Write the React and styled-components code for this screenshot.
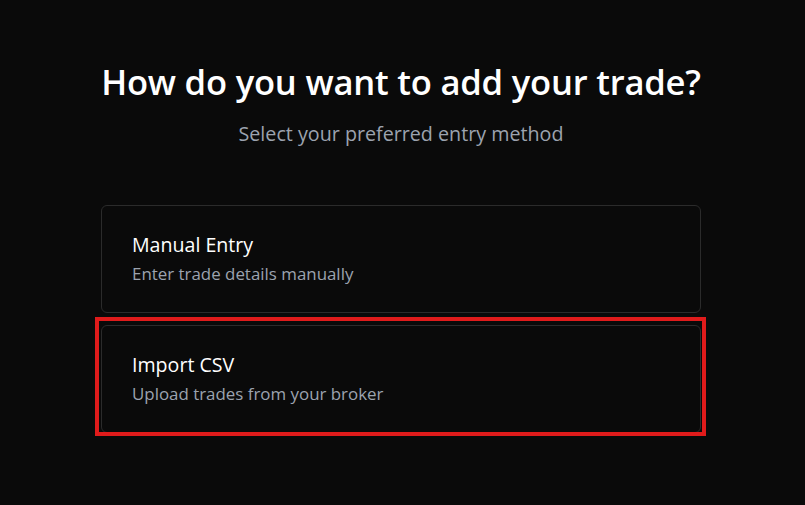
import React from 'react';
import styled, { createGlobalStyle } from 'styled-components';

const GlobalStyle = createGlobalStyle`
  html, body {
    margin: 0;
    padding: 0;
    background: #0a0a0a;
  }
  body {
    font-family: "Open Sans", "Noto Sans", sans-serif;
    color: #ffffff;
  }
`;

const Page = styled.div`
  min-height: 505px;
  display: flex;
  justify-content: center;
  padding-top: 58px;
  box-sizing: border-box;
`;

const Container = styled.div`
  width: 600px;
  margin-left: -3px;
`;

const Header = styled.div`
  text-align: center;
  margin-bottom: 57px;
`;

const Title = styled.h1`
  font-size: 34.6px;
  font-weight: 600;
  letter-spacing: -0.2px;
  margin: 0 0 14px;
  line-height: 48px;
  color: #ffffff;
  white-space: nowrap;
`;

const Subtitle = styled.p`
  font-size: 19.7px;
  color: #9ca3af;
  margin: 0;
  line-height: 28px;
`;

const Options = styled.div`
  display: flex;
  flex-direction: column;
  gap: 12px;
`;

const OptionCard = styled.button`
  position: relative;
  display: block;
  width: 100%;
  text-align: left;
  background: #0a0a0a;
  border: 1px solid #2b2b2b;
  border-radius: 6px;
  padding: 25px 30px 26px;
  font-family: inherit;
  cursor: pointer;
  outline: none;

  &::after {
    content: '';
    display: ${props => (props.$selected ? 'block' : 'none')};
    position: absolute;
    top: -9px;
    left: -7px;
    right: -6px;
    bottom: -4px;
    border: 4px solid #e01b1b;
    pointer-events: none;
  }
`;

const OptionTitle = styled.div`
  font-size: 19.6px;
  font-weight: 500;
  color: #ffffff;
  line-height: 28px;
  margin-bottom: 3px;
`;

const OptionText = styled.div`
  font-size: 16.9px;
  color: #9ca3af;
  line-height: 24px;
`;

const options = [
  { id: 'manual', title: 'Manual Entry', text: 'Enter trade details manually' },
  { id: 'csv', title: 'Import CSV', text: 'Upload trades from your broker' },
];

const App = () => {
  const selected = 'csv';

  return (
    <>
      <GlobalStyle />
      <Page>
        <Container>
          <Header>
            <Title>How do you want to add your trade?</Title>
            <Subtitle>Select your preferred entry method</Subtitle>
          </Header>
          <Options>
            {options.map(option => (
              <OptionCard key={option.id} $selected={option.id === selected}>
                <OptionTitle>{option.title}</OptionTitle>
                <OptionText>{option.text}</OptionText>
              </OptionCard>
            ))}
          </Options>
        </Container>
      </Page>
    </>
  );
};

export default App;
